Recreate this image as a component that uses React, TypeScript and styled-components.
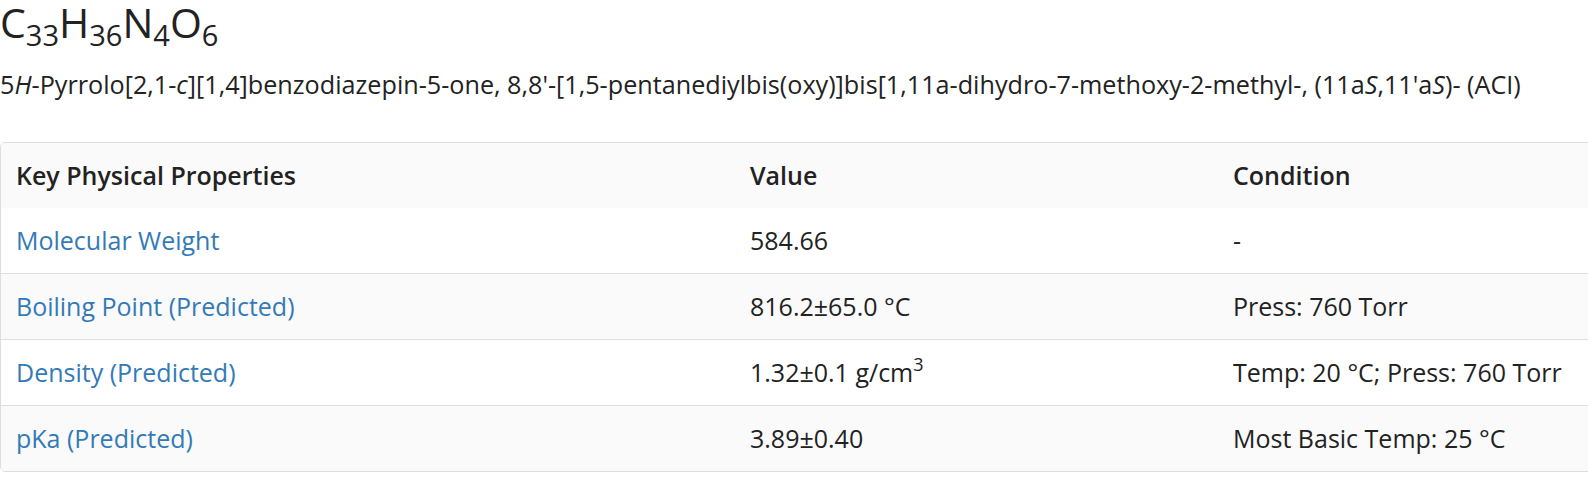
import React from 'react';
import styled, { createGlobalStyle } from 'styled-components';

const GlobalStyle = createGlobalStyle`
    body {
        margin: 0;
        overflow: hidden;
        background: #fff;
        font-family: "Open Sans", "Liberation Sans", sans-serif;
        color: #222;
    }
`;

const Page = styled.div`
    display: flex;
    flex-direction: column;
`;

const Formula = styled.h1`
    margin: 0;
    font-size: 41px;
    font-weight: 400;
    line-height: 45px;
    color: #222;
`;

const Sub = styled.sub`
    font-size: 29px;
    vertical-align: -8px;
    line-height: 0;
`;

const Name = styled.div`
    margin-top: 22px;
    font-size: 25.2px;
    line-height: 35px;
    color: #222;
`;

const TableBox = styled.div`
    margin-top: 40px;
    width: 1640px;
    border: 1px solid #dedede;
    border-radius: 5px;
    overflow: hidden;
`;

const Table = styled.table`
    width: 100%;
    border-collapse: collapse;
    table-layout: fixed;
    font-size: 25px;
`;

const Row = styled.tr<{ $shade?: boolean }>`
    background: ${(p) => (p.$shade ? '#fafafa' : '#fff')};
    & + & {
        border-top: 1px solid #dedede;
    }
`;

const Head = styled.th<{ $w?: number }>`
    width: ${(p) => (p.$w ? `${p.$w}px` : 'auto')};
    text-align: left;
    font-weight: 600;
    padding: 15px 17px 15px 15px;
    line-height: 35px;
    color: #222;
`;

const Cell = styled.td`
    padding: 15px 17px 15px 15px;
    line-height: 35px;
    color: #222;
    white-space: nowrap;
`;

const Link = styled.a`
    color: #337ab7;
    text-decoration: none;
`;

const Sup = styled.sup`
    font-size: 18px;
    line-height: 0;
    vertical-align: 11px;
`;

const rows: { name: string; value: React.ReactNode; cond: string }[] = [
    { name: 'Molecular Weight', value: '584.66', cond: '-' },
    { name: 'Boiling Point (Predicted)', value: '816.2±65.0 °C', cond: 'Press: 760 Torr' },
    {
        name: 'Density (Predicted)',
        value: (
            <>
                1.32±0.1 g/cm<Sup>3</Sup>
            </>
        ),
        cond: 'Temp: 20 °C; Press: 760 Torr',
    },
    { name: 'pKa (Predicted)', value: '3.89±0.40', cond: 'Most Basic Temp: 25 °C' },
];

export default function App() {
    return (
        <Page>
            <GlobalStyle />
            <Formula>
                C<Sub>33</Sub>H<Sub>36</Sub>N<Sub>4</Sub>O<Sub>6</Sub>
            </Formula>
            <Name>
                5<i>H</i>-Pyrrolo[2,1-<i>c</i>][1,4]benzodiazepin-5-one, 8,8'-[1,5-pentanediylbis(oxy)]bis[1,11a-dihydro-7-methoxy-2-methyl-, (11a<i>S</i>,11'a<i>S</i>)- (ACI)
            </Name>
            <TableBox>
                <Table>
                    <thead>
                        <Row $shade>
                            <Head $w={702}>Key Physical Properties</Head>
                            <Head $w={451}>Value</Head>
                            <Head>Condition</Head>
                        </Row>
                    </thead>
                    <tbody>
                        {rows.map((r, i) => (
                            <Row key={r.name} $shade={i % 2 === 1}>
                                <Cell>
                                    <Link href="#">{r.name}</Link>
                                </Cell>
                                <Cell>{r.value}</Cell>
                                <Cell>{r.cond}</Cell>
                            </Row>
                        ))}
                    </tbody>
                </Table>
            </TableBox>
        </Page>
    );
}
